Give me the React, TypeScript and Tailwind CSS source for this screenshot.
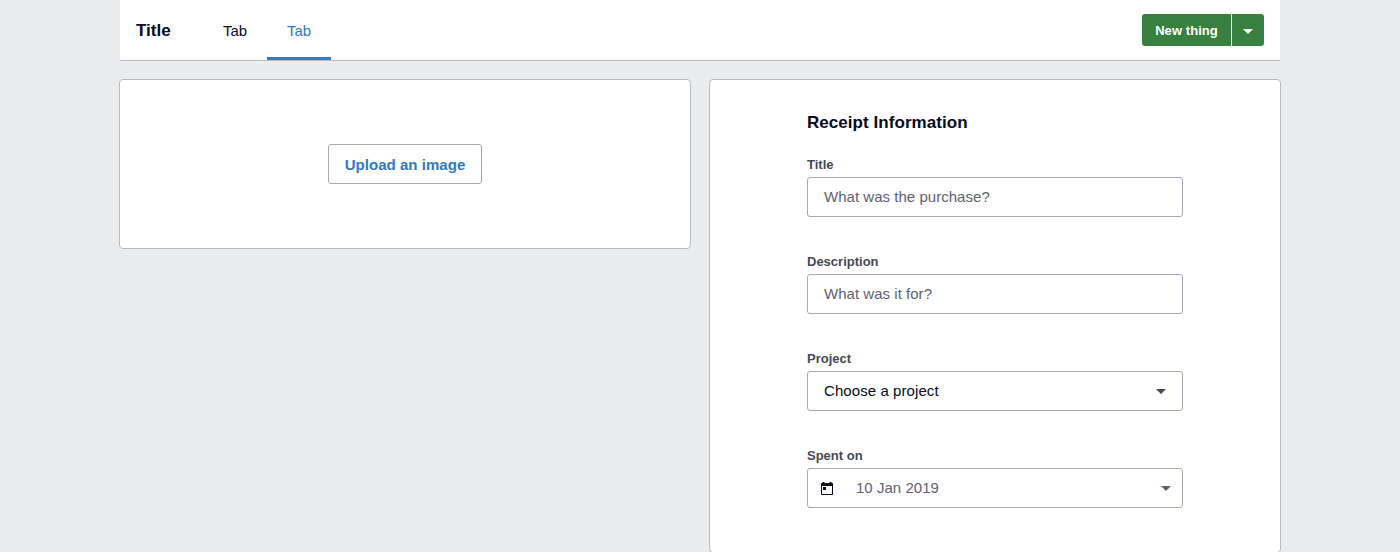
import React from 'react';

function Caret({ className = '' }: { className?: string }) {
  return (
    <svg className={className} width="10" height="5" viewBox="0 0 10 5" fill="currentColor">
      <path d="M0 0h10L5 5z" />
    </svg>
  );
}

function Field({ label, children }: { label: string; children: React.ReactNode }) {
  return (
    <div className="mb-9">
      <div className="mb-1 h-[17px] text-[13px] leading-[17px] font-bold text-[#434a59]">{label}</div>
      <div className="flex h-10 items-center rounded-[3px] border border-[#a6a9b2] bg-white text-[15px] tracking-[0.03px] text-[#5e6272]">{children}</div>
    </div>
  );
}

export default function App() {
  return (
    <div className="h-[552px] overflow-hidden bg-[#ebecee] font-['Liberation_Sans',Arial,sans-serif] text-[#040c1e]">
      <div className="mx-auto w-[1160px]">
        <header className="flex h-[61px] border-b border-[#b9bbc1] bg-white pr-4 pl-4">
          <div className="flex h-[60px] w-[67px] items-center pt-0.5 text-[17px] font-bold">Title</div>
          <div className="flex h-[60px] w-16 items-center justify-center pt-0.5 text-[15px]">Tab</div>
          <div className="flex h-[60px] w-16 items-center justify-center border-b-3 border-[#317bc0] pt-[5px] text-[15px] text-[#317bc0]">Tab</div>
          <div className="mt-[14px] ml-auto flex h-8 gap-px text-[13px] font-bold text-white">
            <button className="w-[89px] rounded-l-[3px] bg-[#37803f] pt-px tracking-[0.06px]">New thing</button>
            <button className="flex w-8 items-center justify-center rounded-r-[3px] bg-[#37803f] pt-[3px]"><Caret /></button>
          </div>
        </header>
      </div>
      <main className="mx-auto mt-[18px] flex w-[1162px] items-start justify-between">
        <section className="flex h-[170px] w-[572px] items-center justify-center rounded-[4px] border border-[#b9bbc1] bg-white">
          <button className="h-10 w-[154px] rounded-[3px] border border-[#a6a9b2] pt-0.5 text-[15px] font-bold tracking-[0.04px] text-[#317bc0]">Upload an image</button>
        </section>
        <section className="h-[474px] w-[572px] rounded-[4px] border border-[#b9bbc1] bg-white px-[97px] pt-[33px]">
          <h2 className="mb-[23px] h-5 text-[17px] leading-5 font-bold tracking-[0.05px]">Receipt Information</h2>
          <Field label="Title"><span className="pl-4">What was the purchase?</span></Field>
          <Field label="Description"><span className="pl-4">What was it for?</span></Field>
          <Field label="Project"><span className="pl-4 tracking-[0.08px] text-[#040c1e]">Choose a project</span><Caret className="mr-4 ml-auto text-[#434a59]" /></Field>
          <Field label="Spent on">
            <svg className="ml-3" width="14" height="14" viewBox="0 0 14 14" fill="#040c1e"><path fillRule="evenodd" d="M2.5 1h2v1h5V1h2v1h.8a.7.7 0 0 1 .7.7v10.6a.7.7 0 0 1-.7.7H1.7a.7.7 0 0 1-.7-.7V2.7a.7.7 0 0 1 .7-.7h.8zM2 5v8h10V5zM3 6h3v3H3z" /></svg>
            <span className="pl-[22px]">10 Jan 2019</span><Caret className="mr-[11px] ml-auto text-[#5e6272]" />
          </Field>
        </section>
      </main>
    </div>
  );
}
